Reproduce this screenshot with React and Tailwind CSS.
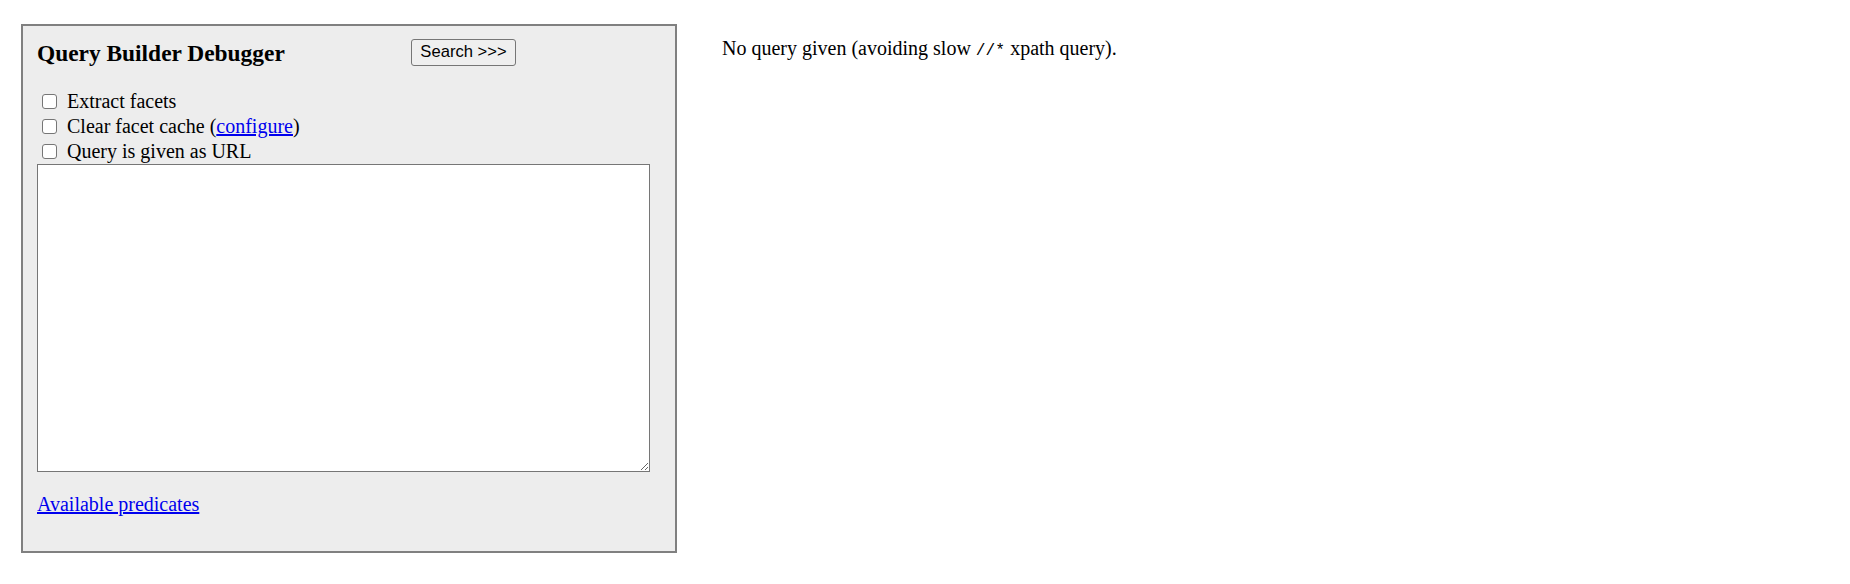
import React, { useState } from "react";

const serif = "font-['Liberation_Serif','Times_New_Roman',serif]";

const CheckRow = ({ checked, onChange, children }) => (
  <label className="flex items-center h-[25px] leading-[25px] text-[20px] text-black">
    <input
      type="checkbox"
      checked={checked}
      onChange={onChange}
      className="appearance-none w-[15px] h-[15px] ml-[5px] mr-[10px] border border-[#767676] rounded-[3px] bg-white checked:bg-[#0075ff] checked:border-[#0075ff] shrink-0"
    />
    <span>{children}</span>
  </label>
);

const App = () => {
  const [facets, setFacets] = useState(false);
  const [clearCache, setClearCache] = useState(false);
  const [asUrl, setAsUrl] = useState(false);
  const [query, setQuery] = useState("");

  return (
    <div className={`${serif} min-h-[584px] bg-white flex items-start pl-[21px] pt-[24px]`}>
      {/* query form panel */}
      <div className="w-[656px] h-[529px] shrink-0 border-2 border-[#808080] bg-[#ededed] pl-[14px] pt-[13px]">
        <div className="flex items-center h-[27px]">
          <h3 className="w-[374px] text-[23.4px] font-bold leading-[26px] text-black">
            Query Builder Debugger
          </h3>
          <button
            type="button"
            className="w-[105px] h-[27px] border border-[#767676] rounded-[3px] bg-[#efefef] font-['Liberation_Sans',Arial,sans-serif] text-[16.6px] leading-none text-black"
          >
            Search &gt;&gt;&gt;
          </button>
        </div>

        <div className="mt-[23px]">
          <CheckRow checked={facets} onChange={() => setFacets(!facets)}>
            Extract facets
          </CheckRow>
          <CheckRow checked={clearCache} onChange={() => setClearCache(!clearCache)}>
            Clear facet cache (
            <a href="#" className="text-[#0000ee] underline">
              configure
            </a>
            )
          </CheckRow>
          <CheckRow checked={asUrl} onChange={() => setAsUrl(!asUrl)}>
            Query is given as URL
          </CheckRow>
        </div>

        <textarea
          value={query}
          onChange={(e) => setQuery(e.target.value)}
          className="block w-[613px] h-[308px] border border-[#767676] bg-white resize font-['Liberation_Mono',monospace] text-[16px] p-[2px]"
        />

        <div className="mt-[20px] text-[20px] leading-[25px]">
          <a href="#" className="text-[#0000ee] underline">
            Available predicates
          </a>
        </div>
      </div>

      {/* result */}
      <p className="ml-[45px] mt-[12px] text-[20px] leading-[25px] text-black">
        No query given (avoiding slow{" "}
        <code className="font-['Liberation_Mono','Courier_New',monospace] text-[16.25px]">//*</code>{" "}
        xpath query).
      </p>
    </div>
  );
};

export default App;
